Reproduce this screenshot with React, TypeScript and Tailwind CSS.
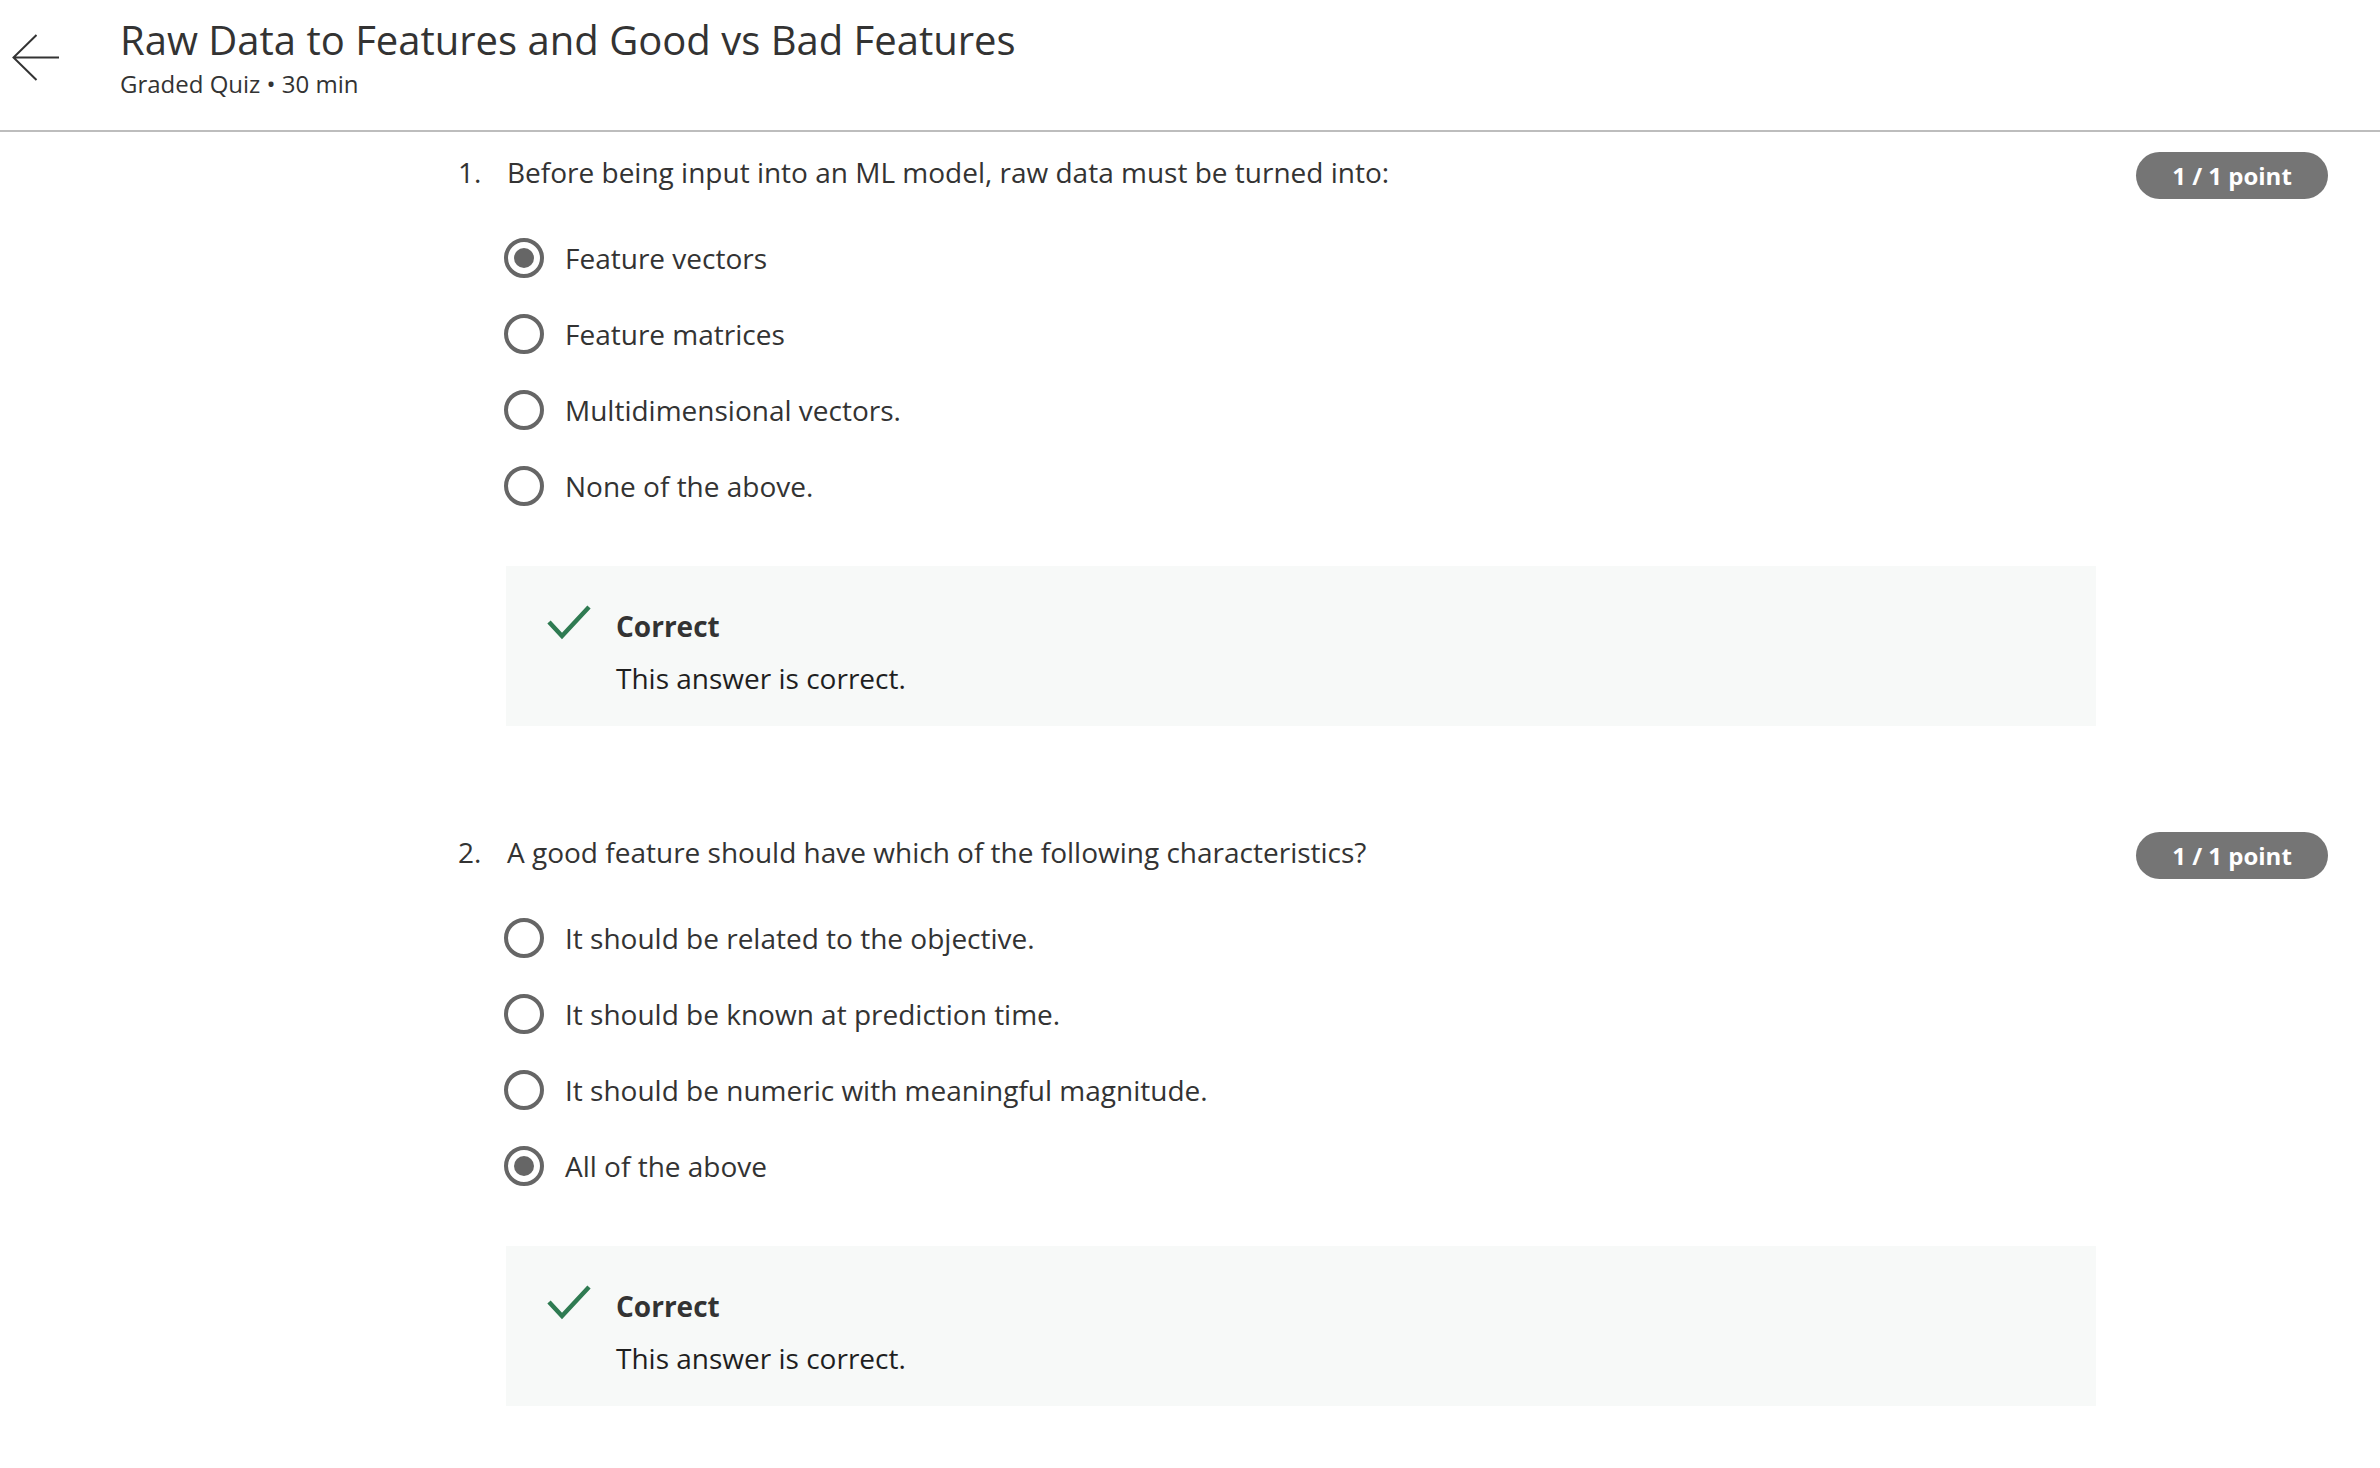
import React from "react";

type Question = {
  num: number;
  text: string;
  options: string[];
  selected: number;
};

const questions: Question[] = [
  {
    num: 1,
    text: "Before being input into an ML model, raw data must be turned into:",
    options: [
      "Feature vectors",
      "Feature matrices",
      "Multidimensional vectors.",
      "None of the above.",
    ],
    selected: 0,
  },
  {
    num: 2,
    text: "A good feature should have which of the following characteristics?",
    options: [
      "It should be related to the objective.",
      "It should be known at prediction time.",
      "It should be numeric with meaningful magnitude.",
      "All of the above",
    ],
    selected: 3,
  },
];

const Radio = ({ checked }: { checked: boolean }) => (
  <span className="flex h-[40px] w-[40px] shrink-0 items-center justify-center rounded-full border-[4px] border-[#666666]">
    {checked && <span className="h-[20px] w-[20px] rounded-full bg-[#666666]" />}
  </span>
);

const Feedback = () => (
  <div className="ml-[48px] mt-[42px] flex h-[160px] w-[1590px] items-start bg-[#f7f9f8] pl-[41px] pt-[34px]">
    <svg
      viewBox="0 0 46 36"
      className="mt-[4px] h-[36px] w-[46px] shrink-0"
      fill="none"
    >
      <path
        d="M2 18L15 32L42 3"
        stroke="#2f7b52"
        strokeWidth="4.5"
        strokeLinejoin="miter"
      />
    </svg>
    <div className="ml-[23px] text-[28px] leading-[52px]">
      <p className="font-bold text-[#333333]">Correct</p>
      <p className="text-[#1f1f1f]">This answer is correct.</p>
    </div>
  </div>
);

const QuestionBlock = ({ q, first }: { q: Question; first: boolean }) => (
  <div className={first ? "pt-[20px]" : "pt-[106px]"}>
    <div className="flex items-start justify-between">
      <div className="flex text-[28px] leading-[40px] text-[#333333]">
        <span className="w-[49px] shrink-0">{q.num}.</span>
        <span>{q.text}</span>
      </div>
      <span className="flex h-[47px] w-[192px] items-center justify-center rounded-full bg-[#757575] text-[24px] font-bold text-white">
        1 / 1 point
      </span>
    </div>
    <div className="mt-[21px] pl-[46px]">
      {q.options.map((opt, i) => (
        <div key={opt} className="flex h-[76px] items-center gap-[21px]">
          <Radio checked={i === q.selected} />
          <span className="text-[28px] leading-[40px] text-[#333333]">{opt}</span>
        </div>
      ))}
    </div>
    <Feedback />
  </div>
);

export default function App() {
  return (
    <div className="min-h-screen bg-white font-['Open_Sans',sans-serif]">
      <header className="flex h-[132px] items-start border-b-2 border-[#bdbdbd]">
        <svg
          viewBox="0 0 48 48"
          className="ml-[12px] mt-[33px] h-[48px] w-[48px] shrink-0"
          fill="none"
        >
          <path
            d="M24.5 2L1.5 24.5L24.5 47M1.5 24.5H47"
            stroke="#333333"
            strokeWidth="2"
          />
        </svg>
        <div className="ml-[60px] pt-[16px]">
          <h1 className="text-[40px] leading-[48px] text-[#333333]">
            Raw Data to Features and Good vs Bad Features
          </h1>
          <p className="mt-[4px] text-[24px] leading-[32px] text-[#333333]">
            Graded Quiz • 30 min
          </p>
        </div>
      </header>
      <main className="pl-[458px] pr-[52px]">
        {questions.map((q, i) => (
          <QuestionBlock key={q.num} q={q} first={i === 0} />
        ))}
      </main>
    </div>
  );
}
